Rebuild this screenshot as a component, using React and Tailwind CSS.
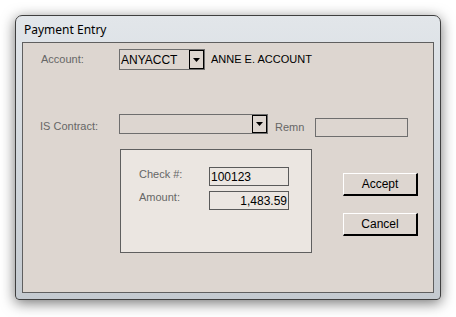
import React from 'react';

const label = "text-[11px] text-[#666666] leading-none";

const DropArrow = () => (
  <div className="w-[15px] h-full border border-black bg-[#ddd6d0] flex items-center justify-center">
    <svg width="7" height="4" viewBox="0 0 7 4">
      <path d="M0 0 L7 0 L3.5 4 Z" fill="#000" />
    </svg>
  </div>
);

const App = () => {
  return (
    <div className="w-[456px] h-[317px] bg-white pt-[15px] pl-[15px]" style={{ fontFamily: '"Liberation Sans", Arial, sans-serif' }}>
      <div className="w-[426px] h-[285px] rounded-t-[7px] rounded-b-[4px] border border-[#3f3f3f] bg-gradient-to-b from-[#e2e6ea] via-[#d2d8dd] to-[#c4cad0] shadow-[0_3px_14px_rgba(0,0,0,0.55)] flex flex-col px-[6px] pb-[6px]">
        <div className="h-[26px] flex items-center pl-[2px] pt-[2px]">
          <span className="text-[12px] text-black" style={{ fontFamily: '"Noto Sans", "Open Sans", sans-serif' }}>Payment Entry</span>
        </div>
        <div className="flex-1 border border-[#5f5f5f] bg-[#ddd6d0]">
          {/* Account row */}
          <div className="flex items-center mt-[6px] h-[21px]">
            <span className={`${label} w-[96px] pl-[18px]`}>Account:</span>
            <div className="w-[86px] h-[21px] border border-[#6e6e6e] flex items-center justify-between">
              <span className="text-[12px] text-black pl-[1px] leading-none">ANYACCT</span>
              <DropArrow />
            </div>
            <span className="text-[11px] text-black ml-[6px] leading-none">ANNE E. ACCOUNT</span>
          </div>

          {/* IS Contract row */}
          <div className="flex items-center mt-[44px] h-[20px]">
            <span className={`${label} w-[96px] pl-[17px] mt-[5px]`}>IS Contract:</span>
            <div className="w-[149px] h-[20px] border border-[#6e6e6e] flex items-center justify-end">
              <DropArrow />
            </div>
            <span className={`${label} ml-[7px] mt-[6px]`}>Remn</span>
            <div className="ml-[11px] mt-[7px] w-[93px] h-[19px] border border-[#6e6e6e]"></div>
          </div>

          {/* Group + buttons */}
          <div className="flex mt-[15px]">
            <div className="ml-[97px] w-[192px] h-[104px] border border-[#5f5f5f] bg-[#ebe6e1] pt-[17px] pl-[18px]">
              <div className="flex items-center h-[19px]">
                <span className={`${label} w-[70px] -mt-[5px]`}>Check #:</span>
                <div className="w-[80px] h-[19px] border border-[#5a5a5a] flex items-center">
                  <span className="text-[12px] text-black pl-[1px] leading-none">100123</span>
                </div>
              </div>
              <div className="flex items-center h-[19px] mt-[5px]">
                <span className={`${label} w-[70px] -mt-[7px]`}>Amount:</span>
                <div className="w-[80px] h-[19px] border border-[#5a5a5a] flex items-center justify-end">
                  <span className="text-[12px] text-black pr-[1px] leading-none">1,483.59</span>
                </div>
              </div>
            </div>
            <div className="ml-[31px] mt-[24px] flex flex-col gap-[17px]">
              <button className="w-[75px] h-[23px] border-t border-l border-white border-b-2 border-r-2 border-b-black border-r-black bg-[#ddd6d0] text-[12px] text-black leading-none">Accept</button>
              <button className="w-[75px] h-[23px] border-t border-l border-white border-b-2 border-r-2 border-b-black border-r-black bg-[#ddd6d0] text-[12px] text-black leading-none">Cancel</button>
            </div>
          </div>
        </div>
      </div>
    </div>
  );
};

export default App;
